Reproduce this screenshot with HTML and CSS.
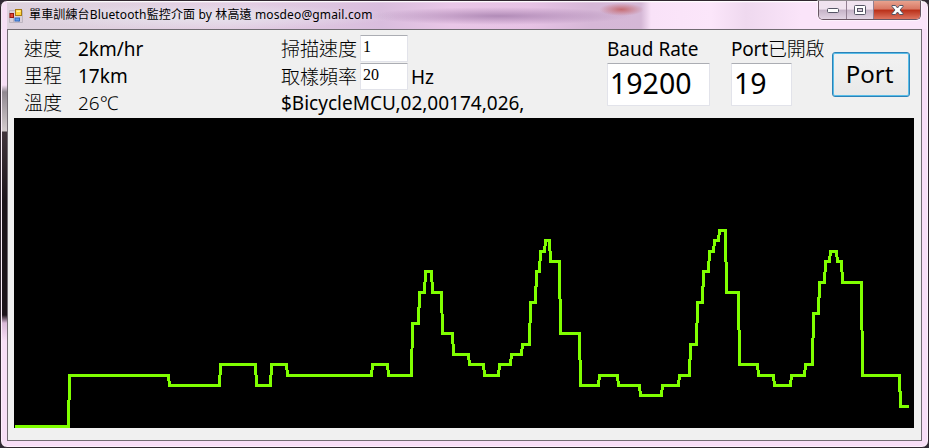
FILE: index.html
```html
<!DOCTYPE html>
<html lang="zh-Hant">
<head>
<meta charset="utf-8">
<title>單車訓練台Bluetooth監控介面</title>
<link rel="stylesheet" href="styles.css">
</head>
<body>
<div class="window">
  <header class="titlebar">
    <svg class="app-icon" width="14" height="14" viewBox="0 0 14 14">
      <path d="M.5 1.500h13v12H.5zM4.500 9v4.500M9.500 9v4.500" fill="#d8ced8" stroke="#bdb4bf"/>
      <rect x="6.500" y=".5" width="6" height="6" fill="#ffd43c" stroke="#a77b14"/>
      <path d="M7.500 1.500h4v1.500h-4z" fill="#fff0a0"/>
      <rect x="1" y="4.500" width="3.500" height="4" fill="#e34a35" stroke="#951713"/>
      <rect x="6" y="9" width="4.500" height="3" fill="#5c9cee" stroke="#3268bd"/>
    </svg>
    <h1 class="title">單車訓練台Bluetooth監控介面 by 林高遠 mosdeo@gmail.com</h1>
    <div class="controls">
      <span class="control"><svg width="14" height="8" viewBox="0 0 14 8"><rect x="1.500" y="2.500" width="11" height="4" rx="1" fill="#fff" stroke="#555565"/></svg></span>
      <span class="control maximize"><svg width="13" height="11" viewBox="0 0 13 11"><rect x=".5" y=".5" width="11" height="9" rx="1" fill="#fff" stroke="#555565"/><rect x="3.500" y="3.500" width="5" height="3" fill="#d8cad8" stroke="#555565"/></svg></span>
      <span class="control close"><svg width="13" height="11" viewBox="0 0 13 11"><path d="M1 .5h3.500l2 2.500 2-2.500H12v1L9 5l3 3.500v1H8.500L6.500 7l-2 2.500H1v-1L4 5 1 1.500z" fill="#fff" stroke="#505466"/></svg></span>
    </div>
  </header>
  <main class="client">
    <section class="panel">
      <dl class="readings">
        <dt>速度</dt><dd class="speed">2km/hr</dd>
        <dt>里程</dt><dd class="distance">17km</dd>
        <dt>溫度</dt><dd class="temperature">26℃</dd>
      </dl>
      <div class="sampling">
        <div class="setting"><span class="setting-label">掃描速度</span><span class="field small">1</span></div>
        <div class="setting"><span class="setting-label">取樣頻率</span><span class="field small">20</span><span class="unit">Hz</span></div>
        <div class="message">$BicycleMCU,02,00174,026,</div>
      </div>
      <div class="connection baud"><span class="caption">Baud Rate</span><span class="field large">19200</span></div>
      <div class="connection port"><span class="caption">Port<span class="state">已開啟</span></span><span class="field large">19</span></div>
      <button class="port-button">Port</button>
    </section>
    <svg class="chart" width="900" height="310" viewBox="14 118 900 310">
      <polyline points="15,426.5 68.5,426.5 69.5,375.5 168.5,375.5 169.5,385.5 219.5,385.5 220.5,364.5 255.5,364.5 256.5,385.5 270.5,385.5 271.5,364.5 286.5,364.5 287.5,375.5 371.5,375.5 372.5,364.5 387.5,364.5 388.5,375.5 411.5,375.5 412.5,323.5 418.5,323.5 419.5,292.5 424.5,292.5 425.5,271.5 431.5,271.5 432.5,292.5 441.5,292.5 442.5,333.5 452.5,333.5 453.5,354.5 468.5,354.5 469.5,364.5 483.5,364.5 484.5,375.5 498.5,375.5 499.5,364.5 510.5,364.5 511.5,354.5 521.5,354.5 522.5,344.5 529.5,344.5 530.5,302.5 535.5,302.5 536.5,271.5 539.5,271.5 540.5,251.5 544.5,251.5 545.5,240.5 549.5,240.5 550.5,261.5 559.5,261.5 560.5,333.5 579.5,333.5 580.5,385.5 598.5,385.5 599.5,375.5 617.5,375.5 618.5,385.5 639.5,385.5 640.5,395.5 661.5,395.5 662.5,385.5 678.5,385.5 679.5,375.5 689.5,375.5 690.5,344.5 696.5,344.5 697.5,302.5 702.5,302.5 703.5,271.5 708.5,271.5 709.5,251.5 713.5,251.5 714.5,240.5 718.5,240.5 719.5,230.5 725.5,230.5 726.5,292.5 738.5,292.5 739.5,364.5 757.5,364.5 758.5,375.5 773.5,375.5 774.5,385.5 790.5,385.5 791.5,375.5 804.5,375.5 805.5,364.5 812.5,364.5 813.5,313.5 818.5,313.5 819.5,282.5 824.5,282.5 825.5,261.5 829.5,261.5 830.5,251.5 836.5,251.5 837.5,261.5 841.5,261.5 842.5,282.5 861.5,282.5 862.5,375.5 899.5,375.5 900.5,406.5 909,406.5"/>
    </svg>
  </main>
</div>
</body>
</html>
```
FILE: styles.css
```css
* { box-sizing: border-box; }
body { margin: 0; background: #302b35; color: #000; font-family: "Noto Sans", "Noto Sans CJK TC", sans-serif; }
.window {
  width: 929px; height: 448px; padding: 0 6px 6px;
  border: 1px solid #30272f; border-radius: 7px;
  background:
    linear-gradient(#f6dff5, #f6dff5 84px, #918991 91px, #d0c8ca 128px, #d0c8ca 130px, #40343b 131px, #1d151b 200px, #1d151b 314px, #d9b9d8 322px, #f6dff5 340px) 1px 0 / 5px 100% no-repeat,
    linear-gradient(#fff, #fff0) 0 0 / 100% 2px no-repeat,
    radial-gradient(ellipse, #c66d74, #c66d7400 70%) 598px 2px / 45px 13px no-repeat,
    radial-gradient(ellipse, #a57fadd0, #a57fad00 70%) 363px 6px / 270px 18px no-repeat,
    radial-gradient(ellipse, #e8eaf0c0, #e8eaf000 70%) 10px 3px / 390px 25px no-repeat,
    linear-gradient(90deg, #ddd2dd, #e3cfe3 230px, #d9bddd 380px, #e9c6e7 450px, #e6c2e4 530px, #d6b7d7 590px, #d5b8d6 640px, #f9e2f8 650px, #fbe6fa 710px, #efd9ef 745px, #fae4f9 800px) 0 0 / 100% 28px no-repeat,
    #f8def7;
  box-shadow: inset 0 0 0 1px #fff8;
}
.titlebar { height: 28px; display: flex; align-items: flex-start; }
.app-icon { margin: 8px 0 0 2px; }
.title { margin: 5px 0 0 6px; font-size: 12px; font-weight: 400; line-height: 18px; white-space: nowrap; width: 350px; letter-spacing: .14px; }
.controls { display: flex; margin: 0 1px 0 auto; height: 19px; border: 1px solid #695663; border-top: 0; border-radius: 0 0 5px 5px; overflow: hidden; box-shadow: 0 0 1px 1px #fff8; }
.control { width: 28px; display: flex; align-items: center; justify-content: center; background: linear-gradient(#f0e3ef 0 45%, #c5b3c7 50%, #e2d4e3); border-right: 1px solid #927f92; }
.maximize { width: 27px; }
.close { width: 46px; border-right: 0; background: linear-gradient(#e8a28e 0, #d87763 45%, #b92f18 50%, #dd7460); }
.client { height: 412px; padding: 0 6px 11px; border: 1px solid #716b72; background: #f0f0f0; }
.panel { height: 88px; display: flex; }
.chart { display: block; background: #000; }
.chart polyline { fill: none; stroke: #80ff00; stroke-width: 3; shape-rendering: crispEdges; }
.readings { margin: 6px 0 0 10px; width: 257px; display: grid; grid-template-columns: 54px 1fr; grid-auto-rows: 27px; font-size: 19px; line-height: 27px; align-content: start; }
.readings dt, .readings dd { margin: 0; }
.readings dt, .setting-label, .state, .readings .temperature { font-weight: 300; }
.sampling { width: 326px; font-size: 19px; padding-top: 5px; }
.setting { height: 28px; display: flex; align-items: flex-start; }
.setting-label { width: 79px; line-height: 29px; }
.unit { margin-left: 3px; line-height: 29px; }
.field { display: block; background: #fff; border: 1px solid #e2e3ea; border-top-color: #abadb3; border-radius: 1px; }
.small { width: 48px; height: 27px; padding-left: 2px; font: 16px/22px "Liberation Serif", serif; }
.message { line-height: 25px; white-space: nowrap; }
.connection { padding-top: 5px; }
.baud { width: 124px; }
.port { width: 101px; }
.caption { display: block; height: 28px; line-height: 28px; font-size: 19px; white-space: nowrap; }
.port .caption { letter-spacing: -.2px; }
.large { width: 103px; height: 43px; padding-left: 2px; font-size: 28.5px; line-height: 38px; }
.port .large { width: 61px; }
.port-button { width: 78px; height: 45px; margin: 22px 0 0; padding: 0 3px 2px 0; border: 1px solid #2c82b8; border-radius: 3px; color: #000; background: linear-gradient(#f2f2f2, #eee 50%, #e8e8e8); box-shadow: inset 0 0 0 1px #58bde8; font: 24px "Noto Sans", sans-serif; }
```
